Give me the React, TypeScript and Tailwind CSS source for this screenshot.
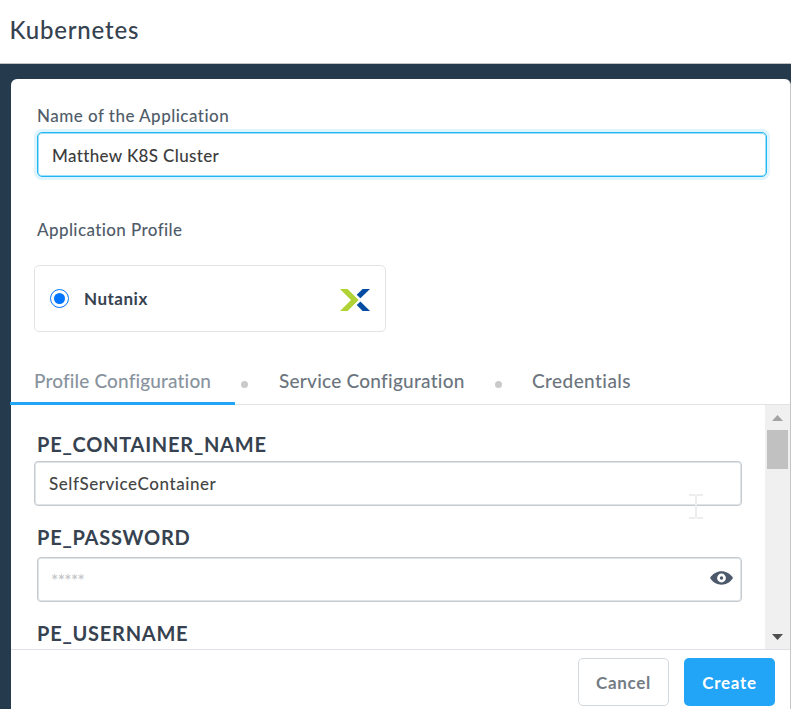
import { ReactNode } from "react";

function NutanixLogo() {
  return (
    <svg width="30" height="22" viewBox="0 0 30 22" className="block">
      <path d="M0 0H7.6L18.6 11L7.6 22H0L11 11Z" fill="#b0d235" />
      <path d="M22.6 0H30L20.4 9.2L16.7 5.8Z" fill="#024da1" />
      <path d="M22.6 22H30L20.4 12.6L16.7 16Z" fill="#024da1" />
    </svg>
  );
}

function EyeIcon() {
  return (
    <svg width="23" height="14" viewBox="0 0 23 14" className="block">
      <path d="M0 7C3 2.4 7 0.3 11.5 0.3S20 2.4 23 7C20 11.6 16 13.7 11.5 13.7S3 11.6 0 7Z" fill="#4c596b" />
      <circle cx="11.5" cy="7" r="4.4" fill="#fff" />
      <circle cx="11.5" cy="7" r="1.7" fill="#4c596b" />
    </svg>
  );
}

function IBeam() {
  return (
    <svg width="14" height="26" viewBox="0 0 14 26" className="absolute left-[678px] top-[89px]">
      <path d="M0 1H6M8 1H14M0 24H6M8 24H14M7 1V24" stroke="#ededed" strokeWidth="2" fill="none" />
    </svg>
  );
}

function Dot() {
  return <span className="mt-[6px] size-[7px] rounded-full bg-[#cacaca]" />;
}

function FieldName({ children }: { children: ReactNode }) {
  return (
    <div className="ml-[3px] h-6 text-[20px] leading-6 font-bold tracking-[0.75px] text-[#36424f]">
      {children}
    </div>
  );
}

export default function App() {
  return (
    <div className="flex h-[709px] w-[791px] flex-col overflow-hidden bg-[#263a4e] font-['Lato',sans-serif] font-medium whitespace-nowrap">
      <header className="flex h-16 shrink-0 items-center border-b border-[#bfc3c6] bg-white pb-[3px] pl-[9.5px]">
        <h1 className="text-[24px] tracking-[0.8px] text-[#36424f]">Kubernetes</h1>
      </header>
      <main className="mt-[15px] ml-[11px] flex min-h-0 flex-1 flex-col rounded-t-[6px] border-r border-[#c6c6c6] bg-white">
        <section className="h-[273px] shrink-0 pt-[25px] pl-[23px]">
          <label className="ml-[3px] block h-6 text-[17px] leading-6 tracking-[0.47px] text-[#505c69]">
            Name of the Application
          </label>
          <div className="mt-[4px] ml-[3px] flex h-[45px] w-[730px] items-center rounded-[5px] border border-[#22b7f2] pt-[2px] pl-[14px] text-[17px] text-[#3c3c3c] shadow-[0_0_0_3px_#dff4fd,inset_0_0_0_1px_#9edff9]">
            <span className="tracking-[0.35px]">Matthew K8S Cluster</span>
          </div>
          <div className="mt-[41px] ml-[3px] h-6 text-[17px] leading-6 tracking-[0.4px] text-[#505c69]">
            Application Profile
          </div>
          <div className="mt-[23px] flex h-[67px] w-[352px] items-center rounded-[5px] border border-[#e0e4e6] pr-[15px] pl-[15px]">
            <span className="flex size-[19px] items-center justify-center rounded-full border border-[#0075ff]">
              <span className="size-[11px] rounded-full bg-[#0075ff]" />
            </span>
            <span className="ml-[15px] text-[17px] font-bold tracking-[0.5px] text-[#36424f]">Nutanix</span>
            <span className="mt-[2px] ml-auto">
              <NutanixLogo />
            </span>
          </div>
        </section>
        <nav className="flex h-[53px] shrink-0 items-center border-b border-[#e1e3e5] text-[19px] text-[#6c757e]">
          <span className="-ml-px flex h-[53px] w-[225px] shrink-0 items-center border-b-3 border-[#22a5f7] pt-[10px] pl-6 tracking-[0.15px] text-[#88939e]">
            Profile Configuration
          </span>
          <span className="mt-[6px] ml-[6px] flex"><Dot /></span>
          <span className="mt-[6px] ml-[31px] w-[216px] tracking-[0.25px]">Service Configuration</span>
          <span className="mt-[6px] flex"><Dot /></span>
          <span className="mt-[6px] ml-[30px] tracking-[0.42px]">Credentials</span>
        </nav>
        <section className="relative flex h-[244px] shrink-0 overflow-hidden">
          <div className="flex-1 pt-[27px] pl-[23px]">
            <FieldName>PE_CONTAINER_NAME</FieldName>
            <div className="mt-[5px] flex h-[45px] w-[708px] items-center rounded-[4px] border border-[#c5cace] pl-[14px] text-[17px] tracking-[0.55px] text-[#454545] shadow-[inset_0_0_0_1px_#e1e4e7]">
              SelfServiceContainer
            </div>
            <div className="mt-[19px]">
              <FieldName>PE_PASSWORD</FieldName>
            </div>
            <div className="mt-[8px] ml-[3px] flex h-[45px] w-[705px] items-center rounded-[4px] border border-[#c5cace] pr-[8px] pl-[13px] text-[17px] tracking-[-0.6px] text-[#c0c4c8] shadow-[inset_0_0_0_1px_#e1e4e7]">
              <span className="pt-[3px]">*****</span>
              <span className="mb-[3px] ml-auto"><EyeIcon /></span>
            </div>
            <div className="mt-[19px]">
              <FieldName>PE_USERNAME</FieldName>
            </div>
          </div>
          <div className="flex w-[25px] flex-col items-center bg-[#f0f0f0]">
            <svg width="11" height="6" viewBox="0 0 11 6" className="mt-[10px]"><path d="M0 6L5.5 0L11 6Z" fill="#a3a3a3" /></svg>
            <div className="mt-[9px] h-[39px] w-[21px] bg-[#c1c1c1]" />
            <svg width="11" height="6" viewBox="0 0 11 6" className="mt-auto mb-[9px]"><path d="M0 0H11L5.5 6Z" fill="#4f4f4f" /></svg>
          </div>
          <IBeam />
        </section>
        <footer className="flex flex-1 items-start justify-end gap-[15px] border-t border-[#dde1e5] pt-2 pr-[15px] text-[17px] font-bold tracking-[0.7px]">
          <button className="h-12 w-[91px] rounded-[5px] border border-[#d3d8dd] pt-[2px] text-[#737c84]">Cancel</button>
          <button className="h-12 w-[91px] rounded-[5px] bg-[#22a5f7] pt-[2px] text-white">Create</button>
        </footer>
      </main>
    </div>
  );
}
